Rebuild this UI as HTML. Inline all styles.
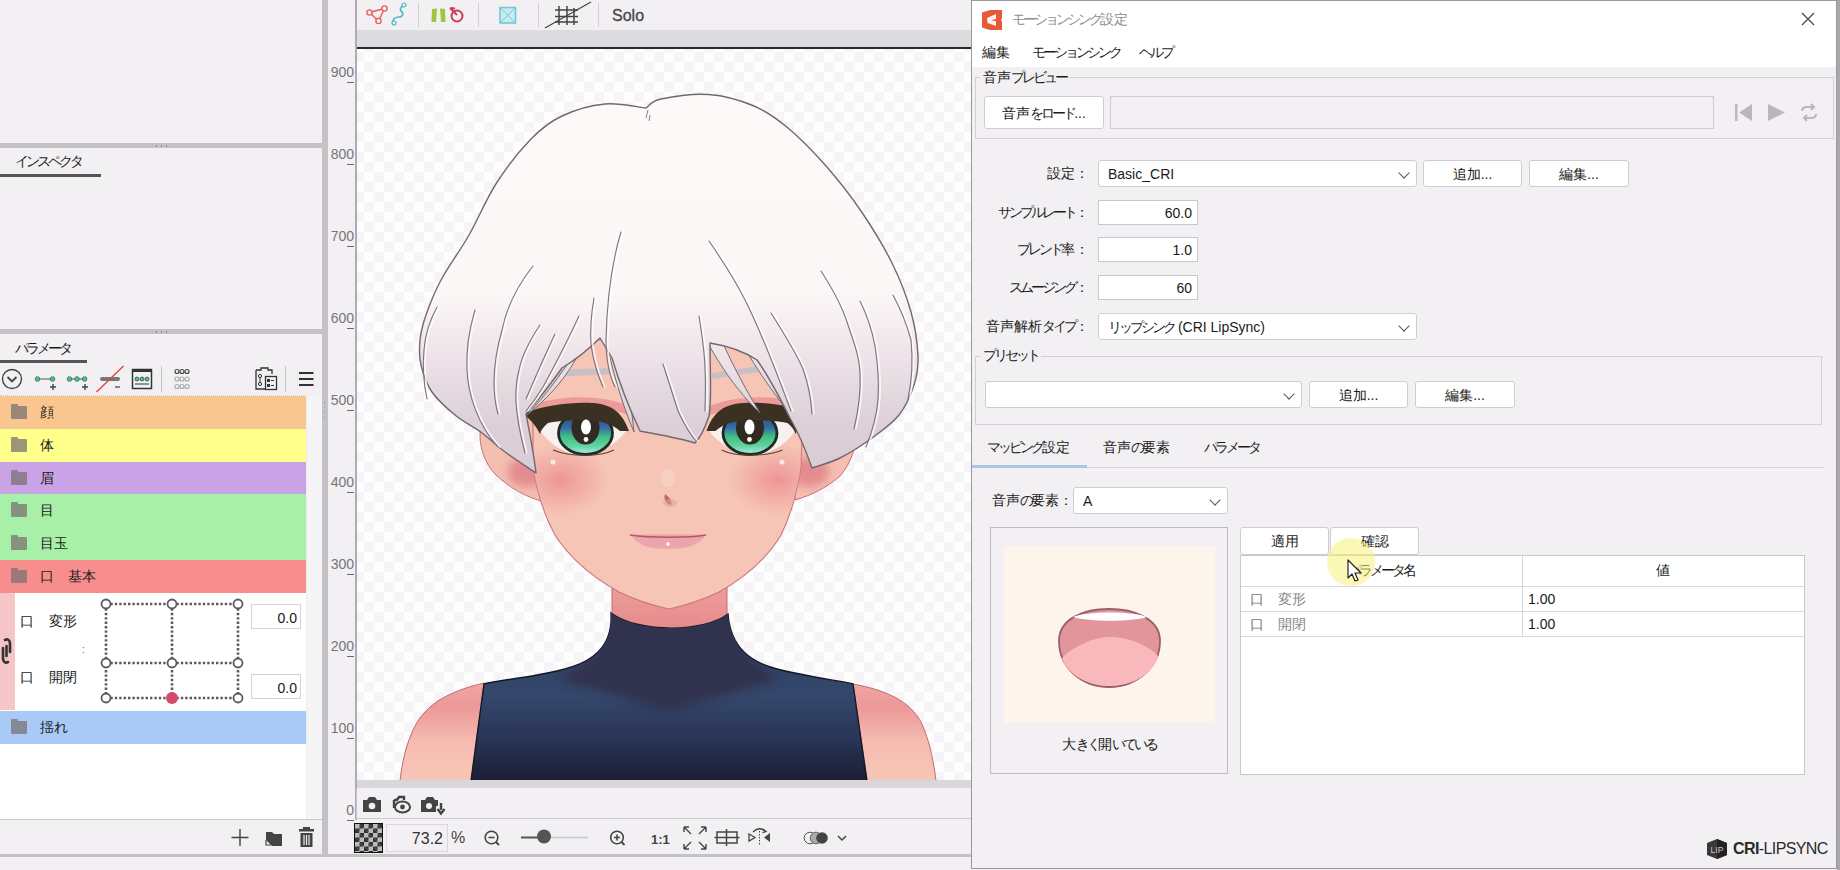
<!DOCTYPE html>
<html><head><meta charset="utf-8">
<style>
*{box-sizing:border-box;margin:0;padding:0}
html,body{width:1840px;height:870px;overflow:hidden;background:#f2f0f3;font-family:"Liberation Sans",sans-serif;color:#1a1a1a;position:relative}
.a{position:absolute}
.t{position:absolute;white-space:nowrap;line-height:1}
.split{background:#c4c2c6}
.row{position:absolute;left:0;width:306px;height:33px}
.row .fold{position:absolute;left:11px;top:10px;width:16px;height:13px;background:#7a7470;opacity:.75;border-radius:1px}
.row .fold:before{content:"";position:absolute;left:0;top:-2px;width:7px;height:3px;background:inherit;border-radius:1px 1px 0 0}
.row .lb{position:absolute;left:40px;top:9px;font-size:14px;line-height:1}
.btn{position:absolute;background:#fff;border:1px solid #cfcdd1;border-radius:3px;font-size:14px;text-align:center;line-height:1}
.inp{position:absolute;background:#fff;border:1px solid #c9c7cb;font-size:14px;line-height:1;text-align:right}
.combo{position:absolute;background:#fff;border:1px solid #cfcdd1;border-radius:3px;font-size:14px;line-height:1}
.chev{position:absolute;right:8px;top:8px;width:8px;height:8px;border-right:1.3px solid #555;border-bottom:1.3px solid #555;transform:rotate(45deg)}
.lbl{position:absolute;font-size:14px;line-height:1;text-align:right;white-space:nowrap}
.k{letter-spacing:-3px}
</style></head><body>

<!-- LEFT PANEL -->
<div class="a split" style="left:0;top:143px;width:322px;height:5px"></div><div class="a" style="left:154px;top:145px;width:15px;height:2px;background:radial-gradient(circle,#8a888c 0.9px,transparent 1.1px) 0 0/5px 2px"></div>
<div class="t" style="left:15px;top:154px;font-size:14px"><span class="k">インスペクタ</span></div>
<div class="a" style="left:0;top:174px;width:101px;height:3px;background:#555"></div>
<div class="a split" style="left:0;top:329px;width:322px;height:5px"></div><div class="a" style="left:154px;top:331px;width:15px;height:2px;background:radial-gradient(circle,#8a888c 0.9px,transparent 1.1px) 0 0/5px 2px"></div>
<div class="t" style="left:15px;top:341px;font-size:14px"><span class="k">パラメータ</span></div>
<div class="a" style="left:0;top:360px;width:87px;height:3px;background:#555"></div>
<div class="a split" style="left:322px;top:0;width:6px;height:855px"></div>

<!-- param list -->
<div class="a" style="left:0;top:395px;width:306px;height:424px;background:#fff"></div>
<div class="row" style="top:396px;background:#f9c68f"><div class="fold"></div><div class="lb">顔</div></div>
<div class="row" style="top:429px;background:#ffff8c"><div class="fold"></div><div class="lb">体</div></div>
<div class="row" style="top:462px;background:#c9a3e5"><div class="fold"></div><div class="lb">眉</div></div>
<div class="row" style="top:494px;background:#a8f0a8"><div class="fold"></div><div class="lb">目</div></div>
<div class="row" style="top:527px;background:#a8f0a8"><div class="fold"></div><div class="lb">目玉</div></div>
<div class="row" style="top:560px;background:#f78d8d"><div class="fold"></div><div class="lb">口　基本</div></div>
<div class="row" style="top:711px;background:#a9caf7"><div class="fold"></div><div class="lb">揺<span class="k">れ</span></div></div>

<!-- param toolbar -->
<svg class="a" style="left:0;top:362px" width="322" height="34" viewBox="0 362 322 34">
<circle cx="12" cy="379" r="9.5" fill="none" stroke="#444" stroke-width="1.4"/>
<path d="M7.5,377 L12,381.5 L16.5,377" fill="none" stroke="#444" stroke-width="1.8"/>
<line x1="37" y1="379" x2="52" y2="379" stroke="#888" stroke-width="1.5"/><circle cx="37.5" cy="379" r="2.3" fill="#4ec49a" stroke="#2a6a55" stroke-width=".8"/><circle cx="52.5" cy="379" r="2.3" fill="#4ec49a" stroke="#2a6a55" stroke-width=".8"/>
<path d="M53,384 V390 M50,387 H56" stroke="#444" stroke-width="1.4"/>
<line x1="69" y1="379" x2="85" y2="379" stroke="#888" stroke-width="1.5"/><circle cx="69.5" cy="379" r="2.3" fill="#4ec49a" stroke="#2a6a55" stroke-width=".8"/><circle cx="77" cy="379" r="2.3" fill="#4ec49a" stroke="#2a6a55" stroke-width=".8"/><circle cx="84.6" cy="379" r="2.3" fill="#4ec49a" stroke="#2a6a55" stroke-width=".8"/>
<path d="M85,384 V390 M82,387 H88" stroke="#444" stroke-width="1.4"/>
<rect x="100" y="377" width="20" height="4" rx="2" fill="#777"/>
<line x1="96.5" y1="392" x2="123.5" y2="366" stroke="#e04040" stroke-width="1.3"/>
<path d="M115,387 H120" stroke="#555" stroke-width="1.4"/>
<rect x="132.5" y="369.5" width="19" height="19" fill="none" stroke="#333" stroke-width="1.5"/><rect x="132" y="369" width="20" height="3" fill="#333"/>
<circle cx="137" cy="379" r="2" fill="#4ec49a" stroke="#333" stroke-width=".7"/><circle cx="142" cy="379" r="2" fill="#4ec49a" stroke="#333" stroke-width=".7"/><circle cx="147" cy="379" r="2" fill="#4ec49a" stroke="#333" stroke-width=".7"/>
<line x1="135" y1="384" x2="149" y2="384" stroke="#333" stroke-width="1"/>
<line x1="161.5" y1="366" x2="161.5" y2="392" stroke="#c8c6ca" stroke-width="1"/>
<g fill="none" stroke-width="1.2"><g stroke="#444"><circle cx="177" cy="371.5" r="2"/><circle cx="182" cy="371.5" r="2"/><circle cx="187" cy="371.5" r="2"/></g>
<g stroke="#aaa"><circle cx="177" cy="379" r="2"/><circle cx="182" cy="379" r="2"/><circle cx="187" cy="379" r="2"/><circle cx="177" cy="386.5" r="2"/><circle cx="182" cy="386.5" r="2"/><circle cx="187" cy="386.5" r="2"/></g></g>
<path d="M256,370 H261 V368 H268 V370 H272 V374 M256,370 V389 H265" fill="none" stroke="#333" stroke-width="1.3"/>
<rect x="265.5" y="376.5" width="11" height="13" fill="none" stroke="#333" stroke-width="1.3"/>
<rect x="267" y="379" width="3" height="3" fill="#333"/><rect x="267" y="384" width="3" height="3" fill="#333"/><path d="M271,380.5 H274 M271,385.5 H274" stroke="#333"/>
<circle cx="260" cy="376" r="1.6" fill="none" stroke="#333"/><circle cx="260" cy="384" r="1.6" fill="none" stroke="#333"/><path d="M260,377.5 V382.5" stroke="#333"/>
<line x1="285.5" y1="366" x2="285.5" y2="392" stroke="#c8c6ca" stroke-width="1"/>
<path d="M299,373 H313.5 M299,379 H313.5 M299,385 H313.5" stroke="#333" stroke-width="2.2"/>
</svg>
<div class="a" style="left:0;top:395px;width:306px;height:1px;border-top:1px dotted #d8c8b0"></div>
<div class="a" style="left:306px;top:396px;width:16px;height:423px;background:#f5f4f7;border-left:1px solid #ecebee"></div>
<div class="a" style="left:323px;top:400px;width:3px;height:20px;background:radial-gradient(circle,#999 0.8px,transparent 1px) 0 0/3px 5px"></div>
<!-- expanded mouth params -->
<div class="a" style="left:0;top:593px;width:15px;height:117px;background:#f5c5c8"></div>
<svg class="a" style="left:0;top:638px" width="14" height="26" viewBox="0 0 14 26"><path d="M5,2 Q9,0 10,5 L10,14 M8,24 Q4,26 3,21 L3,10 M6.5,8 L6.5,18" fill="none" stroke="#333" stroke-width="2.6" stroke-linecap="round"/></svg>
<div class="t" style="left:20px;top:614px;font-size:14px">口</div>
<div class="t" style="left:49px;top:614px;font-size:14px">変形</div>
<div class="t" style="left:20px;top:670px;font-size:14px">口</div>
<div class="t" style="left:49px;top:670px;font-size:14px">開閉</div>
<div class="t" style="left:82px;top:645px;font-size:10px;color:#666">:</div>
<svg class="a" style="left:98px;top:596px" width="150" height="110" viewBox="98 596 150 110">
<g stroke="#5c5a5e" stroke-width="2.6" stroke-dasharray="2.4 2" fill="none">
<path d="M106,604 H238 M106,663 H238 M106,698 H238 M106,604 V698 M172,604 V698 M238,604 V698"/></g>
<g fill="#fff" stroke="#5c5a5e" stroke-width="1.8">
<circle cx="106" cy="604" r="4.5"/><circle cx="172" cy="604" r="4.5"/><circle cx="238" cy="604" r="4.5"/>
<circle cx="106" cy="663" r="4.5"/><circle cx="172" cy="663" r="4.5"/><circle cx="238" cy="663" r="4.5"/>
<circle cx="106" cy="698" r="4.5"/><circle cx="238" cy="698" r="4.5"/></g>
<circle cx="172" cy="698" r="6" fill="#d54a6a"/>
</svg>
<div class="inp" style="left:251px;top:604px;width:50px;height:25px;padding:6px 3px 0 0;border-color:#d5d3d7">0.0</div>
<div class="inp" style="left:251px;top:674px;width:50px;height:25px;padding:6px 3px 0 0;border-color:#d5d3d7">0.0</div>
<!-- bottom toolbar -->
<svg class="a" style="left:225px;top:824px" width="97" height="28" viewBox="225 824 97 28">
<path d="M240,829 V846 M231.5,837.5 H248.5" stroke="#444" stroke-width="1.4"/>
<path d="M266,832 H272 L274,834 H282 V846 H272 L266,840 Z" fill="#444"/><path d="M266,840 V845 H271" fill="none" stroke="#444" stroke-width="1.2"/>
<rect x="299" y="829" width="15" height="2.5" fill="#444"/><rect x="303" y="827" width="7" height="2.5" fill="#444"/>
<path d="M300.5,833 H312.5 V847 H300.5 Z" fill="#444"/><path d="M304,835 V845 M306.5,835 V845 M309,835 V845" stroke="#f2f0f3" stroke-width="1.2"/>
</svg>
<div class="a" style="left:0;top:819px;width:322px;height:1px;background:#cac8cc"></div>
<div class="a split" style="left:0;top:854px;width:971px;height:3px"></div>

<!-- ruler -->
<div class="t" style="right:1486px;top:65px;font-size:14px;color:#777579">900</div><div class="a" style="left:347px;top:82px;width:7px;height:1px;background:#6a686c"></div>
<div class="t" style="right:1486px;top:147px;font-size:14px;color:#777579">800</div><div class="a" style="left:347px;top:164px;width:7px;height:1px;background:#6a686c"></div>
<div class="t" style="right:1486px;top:229px;font-size:14px;color:#777579">700</div><div class="a" style="left:347px;top:246px;width:7px;height:1px;background:#6a686c"></div>
<div class="t" style="right:1486px;top:311px;font-size:14px;color:#777579">600</div><div class="a" style="left:347px;top:328px;width:7px;height:1px;background:#6a686c"></div>
<div class="t" style="right:1486px;top:393px;font-size:14px;color:#777579">500</div><div class="a" style="left:347px;top:410px;width:7px;height:1px;background:#6a686c"></div>
<div class="t" style="right:1486px;top:475px;font-size:14px;color:#777579">400</div><div class="a" style="left:347px;top:492px;width:7px;height:1px;background:#6a686c"></div>
<div class="t" style="right:1486px;top:557px;font-size:14px;color:#777579">300</div><div class="a" style="left:347px;top:574px;width:7px;height:1px;background:#6a686c"></div>
<div class="t" style="right:1486px;top:639px;font-size:14px;color:#777579">200</div><div class="a" style="left:347px;top:656px;width:7px;height:1px;background:#6a686c"></div>
<div class="t" style="right:1486px;top:721px;font-size:14px;color:#777579">100</div><div class="a" style="left:347px;top:738px;width:7px;height:1px;background:#6a686c"></div>
<div class="t" style="right:1486px;top:803px;font-size:14px;color:#777579">0</div><div class="a" style="left:347px;top:820px;width:7px;height:1px;background:#6a686c"></div>

<div class="a" style="left:355px;top:0;width:2px;height:820px;background:#aeacb0"></div>

<!-- canvas toolbar -->
<div class="a" style="left:357px;top:30px;width:614px;height:17px;background:#dddbde"></div>
<div class="a" style="left:357px;top:47px;width:614px;height:2px;background:#2a2a2e"></div>
<svg class="a" style="left:357px;top:0" width="300" height="30" viewBox="357 0 300 30">
<g fill="none" stroke="#e8605c" stroke-width="1.5"><path d="M369.5,12.5 L384.5,8.5 L378.5,21 Z"/></g>
<g fill="#f2f0f3" stroke="#e8605c" stroke-width="1.4"><circle cx="369.5" cy="12.5" r="2.6"/><circle cx="384.5" cy="8.5" r="2.6"/><circle cx="378.5" cy="21" r="2.6"/></g>
<path d="M394,23 C391,19 396,17 399,17 C403,17 404,13 401,11 C399,9 402,6 404,5" fill="none" stroke="#4cb8c0" stroke-width="1.6"/>
<circle cx="394" cy="23" r="2" fill="#f2f0f3" stroke="#4cb8c0" stroke-width="1.2"/><circle cx="404" cy="5" r="2" fill="#f2f0f3" stroke="#4cb8c0" stroke-width="1.2"/>
<line x1="418.5" y1="3" x2="418.5" y2="27" stroke="#d0ced2"/>
<path d="M432,9 L437,8.5 L436,22 L431.5,22 Z M440,8.5 L445,9 L445.5,22 L441,22 Z" fill="#9cc840"/>
<circle cx="457" cy="16" r="5.5" fill="none" stroke="#d03a5a" stroke-width="2"/><path d="M450,8 L457,15 M450,8 L455,8.5" stroke="#d03a5a" stroke-width="1.8"/>
<line x1="478.5" y1="3" x2="478.5" y2="27" stroke="#d0ced2"/>
<rect x="500" y="7.5" width="15.5" height="15.5" fill="#c8ecf0" stroke="#70c8d8" stroke-width="1.6"/>
<path d="M500,7.5 L515.5,23 M515.5,7.5 L500,23" stroke="#70c8d8" stroke-width="1"/>
<line x1="538.5" y1="3" x2="538.5" y2="27" stroke="#d0ced2"/>
<path d="M559,6 V25 M567,6 V25 M574,8 V25 M555,10 H578 M555,16.5 H578 M555,22 H578" stroke="#444" stroke-width="1.5"/>
<line x1="545" y1="28" x2="591" y2="2" stroke="#444" stroke-width="1.2"/>
<line x1="598.5" y1="3" x2="598.5" y2="27" stroke="#d0ced2"/>
</svg>
<div class="t" style="left:612px;top:8px;font-size:16px;color:#4a484c;-webkit-text-stroke:0.35px #4a484c">Solo</div>

<!-- canvas -->
<div class="a" id="canvas" style="left:357px;top:49px;width:614px;height:731px;background:repeating-conic-gradient(#f7f4f8 0 25%,#fefdfe 0 50%) 7px 3px/20px 20px"></div>
<!--CHAR--><svg class="a" style="left:357px;top:49px" width="614" height="731" viewBox="357 49 614 731">
<defs>
<linearGradient id="hairG" x1="0" y1="95" x2="0" y2="475" gradientUnits="userSpaceOnUse">
<stop offset="0" stop-color="#fdf9f9"/><stop offset="0.52" stop-color="#fcf7f7"/><stop offset="0.66" stop-color="#f0e6eb"/><stop offset="0.86" stop-color="#ddd0d8"/><stop offset="1" stop-color="#d8cbd4"/></linearGradient>
<linearGradient id="sideG" x1="0" y1="300" x2="0" y2="475" gradientUnits="userSpaceOnUse">
<stop offset="0" stop-color="#fcf7f7" stop-opacity="0"/><stop offset="1" stop-color="#f4eef2" stop-opacity=".9"/></linearGradient>
<linearGradient id="shirtG" x1="0" y1="612" x2="0" y2="781" gradientUnits="userSpaceOnUse"><stop offset="0" stop-color="#30405f"/><stop offset="0.5" stop-color="#34486c"/><stop offset="0.75" stop-color="#2a3456"/><stop offset="1" stop-color="#1b1d34"/></linearGradient>
<linearGradient id="armL" x1="0" y1="683" x2="0" y2="781" gradientUnits="userSpaceOnUse"><stop offset="0" stop-color="#f0a6a2"/><stop offset="0.25" stop-color="#ec9898"/><stop offset="0.6" stop-color="#f5bcb0"/><stop offset="1" stop-color="#f7c6b7"/></linearGradient>
<linearGradient id="neckG" x1="0" y1="560" x2="0" y2="630" gradientUnits="userSpaceOnUse"><stop offset="0" stop-color="#f0aaa2"/><stop offset="1" stop-color="#e68a8c"/></linearGradient>
<radialGradient id="blush"><stop offset="0" stop-color="#ec8e90" stop-opacity=".9"/><stop offset="0.5" stop-color="#ee9898" stop-opacity=".5"/><stop offset="1" stop-color="#ee9898" stop-opacity="0"/></radialGradient>
<radialGradient id="irisG" cx="0.5" cy="0.7" r="0.65"><stop offset="0" stop-color="#a8e4e4"/><stop offset="0.4" stop-color="#50c890"/><stop offset="0.75" stop-color="#3a86a8"/><stop offset="1" stop-color="#2a4a80"/></radialGradient>
<linearGradient id="irisL" x1="0" y1="0" x2="0" y2="1"><stop offset="0" stop-color="#2a4470"/><stop offset="0.38" stop-color="#3a6aa8"/><stop offset="0.5" stop-color="#3aa090"/><stop offset="0.6" stop-color="#42c282"/><stop offset="0.8" stop-color="#62d2a2"/><stop offset="1" stop-color="#b4ece8"/></linearGradient>
<clipPath id="faceClip"><path d="M533,340 L533,468 C537,493 544,515 555,535 C571,560 594,578 619,592 C638,601 655,606 669,609 C683,606 700,601 719,592 C744,578 766,560 781,535 C791,515 797,493 801,468 L805,340 Z"/></clipPath>
<filter id="blur3" x="-20%" y="-20%" width="140%" height="140%"><feGaussianBlur stdDeviation="5"/></filter>
<clipPath id="shirtClip"><path d="M611,613 C612,628 608,642 598,652 C585,665 565,670 537,675 C515,679 495,681 484,684 L471,781 L867,781 L853,684 C842,681 822,679 805,675 C777,670 757,665 744,652 C734,642 729,628 728,614 C705,632 640,634 611,613 Z"/></clipPath>
<clipPath id="earL"><path d="M540,418 C515,415 490,416 481,426 C478,440 482,460 495,474 C510,488 525,497 545,502 Z"/></clipPath><clipPath id="earR"><path d="M798,418 C823,415 848,420 855,430 C857,445 852,462 840,476 C826,488 812,495 795,500 Z"/></clipPath>
<filter id="blur2" x="-50%" y="-50%" width="200%" height="200%"><feGaussianBlur stdDeviation="4"/></filter>
</defs>
<!-- arms -->
<path d="M484,683 C455,690 430,700 416,724 C405,745 402,765 400,781 L471,781 Z" fill="url(#armL)" stroke="#c46a72" stroke-width="1"/>
<path d="M853,684 C885,690 910,700 922,724 C931,745 934,765 936,781 L867,781 Z" fill="url(#armL)" stroke="#c46a72" stroke-width="1"/>
<!-- neck -->
<path d="M612,560 L612,645 L727,645 L727,560 Z" fill="url(#neckG)" stroke="#c46a72" stroke-width="1"/>
<!-- shirt -->
<path d="M611,613 C612,628 608,642 598,652 C585,665 565,670 537,675 C515,679 495,681 484,684 L471,781 L867,781 L853,684 C842,681 822,679 805,675 C777,670 757,665 744,652 C734,642 729,628 728,614 C705,632 640,634 611,613 Z" fill="url(#shirtG)" stroke="#141828" stroke-width="1.4"/>
<g clip-path="url(#shirtClip)"><path d="M600,600 L598,652 C585,663 570,672 560,680 C600,690 630,700 668,712 C706,700 740,690 780,680 C770,672 755,663 744,652 L740,600 Z" fill="#30304e" opacity=".95" filter="url(#blur3)"/></g>

<!-- ears -->
<path d="M540,418 C515,415 490,416 481,426 C478,440 482,460 495,474 C510,488 525,497 545,502 Z" fill="#f4beb0" stroke="#c66f72" stroke-width="1"/>
<g clip-path="url(#earL)"><ellipse cx="528" cy="472" rx="20" ry="15" fill="#e07f86" opacity=".8" filter="url(#blur2)"/></g>
<path d="M798,418 C823,415 848,420 855,430 C857,445 852,462 840,476 C826,488 812,495 795,500 Z" fill="#f4beb0" stroke="#c66f72" stroke-width="1"/>
<g clip-path="url(#earR)"><ellipse cx="809" cy="472" rx="20" ry="15" fill="#e07f86" opacity=".8" filter="url(#blur2)"/></g>
<!-- face -->
<path d="M533,340 L533,468 C537,493 544,515 555,535 C571,560 594,578 619,592 C638,601 655,606 669,609 C683,606 700,601 719,592 C744,578 766,560 781,535 C791,515 797,493 801,468 L805,340 Z" fill="#f6c5b5" stroke="#c8767a" stroke-width="1.1"/>
<g clip-path="url(#faceClip)"><ellipse cx="560" cy="480" rx="50" ry="36" fill="url(#blush)"/>
<ellipse cx="778" cy="480" rx="50" ry="36" fill="url(#blush)"/></g>
<circle cx="553" cy="462" r="2.5" fill="#fde8e0"/>
<circle cx="782" cy="462" r="2.5" fill="#fde8e0"/>
<!-- brow shading -->
<path d="M535,404 C565,394 610,395 632,408 L630,416 C605,404 565,404 535,412 Z" fill="#e8848a" opacity=".65"/>
<path d="M706,408 C730,395 775,394 805,404 L805,412 C775,404 735,404 708,416 Z" fill="#e8848a" opacity=".65"/>
<!-- left eye -->
<path d="M535,424 C548,415 600,411 627,430 C615,446 597,455 580,455 C560,453 546,441 535,424 Z" fill="#f7f1f0"/>
<ellipse cx="585.5" cy="433" rx="27" ry="21.5" fill="url(#irisL)" stroke="#1e2a22" stroke-width="2.8"/>
<ellipse cx="585.5" cy="428" rx="14" ry="16.5" fill="#302a20"/>
<path d="M522,414 C545,405 570,402 592,403 C613,404 623,414 629,431 L620,431 C612,424 600,420 585,420 C570,420 557,421 548,423 C544,426 541,430 540,434 C536,426 531,419 522,414 Z" fill="#3b3122"/>
<ellipse cx="586" cy="427" rx="5" ry="7.5" fill="#fff"/>
<circle cx="586" cy="439.5" r="2.4" fill="#fff"/>
<path d="M553,450 C570,457 600,457 614,450" fill="none" stroke="#5a4438" stroke-width="1.1"/>
<!-- right eye -->
<path d="M800.5,424 C787.5,415 735.5,411 708.5,430 C720.5,446 738.5,455 755.5,455 C775.5,453 789.5,441 800.5,424 Z" fill="#f7f1f0"/>
<ellipse cx="750.0" cy="433" rx="27" ry="21.5" fill="url(#irisL)" stroke="#1e2a22" stroke-width="2.8"/>
<ellipse cx="750.0" cy="428" rx="14" ry="16.5" fill="#302a20"/>
<path d="M813.5,414 C790.5,405 765.5,402 743.5,403 C722.5,404 712.5,414 706.5,431 L715.5,431 C723.5,424 735.5,420 750.5,420 C765.5,420 778.5,421 787.5,423 C791.5,426 794.5,430 795.5,434 C799.5,426 804.5,419 813.5,414 Z" fill="#3b3122"/>
<ellipse cx="749.5" cy="427" rx="5" ry="7.5" fill="#fff"/>
<circle cx="749.5" cy="439.5" r="2.4" fill="#fff"/>
<path d="M782.5,450 C765.5,457 735.5,457 721.5,450" fill="none" stroke="#5a4438" stroke-width="1.1"/>
<!-- nose -->
<ellipse cx="668" cy="478" rx="7" ry="9" fill="#fbdcd4" opacity=".45"/>
<path d="M665,494 C669,497 673,501 671,505 C667,505 663,500 665,494 Z" fill="#b86a6a"/>
<ellipse cx="670" cy="503" rx="7" ry="4" fill="#e8a09a" opacity=".55"/>
<!-- mouth -->
<path d="M631,535 C650,534 690,534 706,535 C698,546 685,549 668,549 C650,549 638,546 631,535 Z" fill="#eb9fab" opacity=".85"/>
<path d="M630,535 C650,538 690,538 706,535" fill="none" stroke="#b25a62" stroke-width="1.6"/>
<circle cx="668" cy="544" r="1.8" fill="#fff" opacity=".9"/>
<!-- headband bits -->
<path d="M553,370 L612,368 L613,374 L551,377 Z" fill="#c9c0c6"/>
<path d="M712,373 L770,364 L772,370 L712,379 Z" fill="#c9c0c6"/>
<!-- crossing strands over gaps -->
<path d="M688,300 C703,340 730,385 760,413 C740,380 720,342 706,300 Z" fill="url(#hairG)" stroke="#756c74" stroke-width="1" stroke-linejoin="round"/>
<path d="M722,310 C745,350 770,392 797,421 C777,387 757,350 740,310 Z" fill="url(#hairG)" stroke="#756c74" stroke-width="1" stroke-linejoin="round"/>
<path d="M598,300 C607,350 618,395 634,432 C630,395 624,350 616,300 Z" fill="url(#hairG)" stroke="#756c74" stroke-width="1" stroke-linejoin="round"/>
<path d="M596,300 C590,345 565,385 527,415 C556,385 580,345 612,300 Z" fill="url(#hairG)" stroke="#756c74" stroke-width="1" stroke-linejoin="round"/>
<!-- hair main -->
<path d="M536,473 C530.8,469.5 514.0,458.7 505.0,452.0 C496.0,445.3 490.3,439.2 482.0,433.0 C473.7,426.8 463.3,421.8 455.0,415.0 C446.7,408.2 437.7,400.3 432.0,392.0 C426.3,383.7 423.0,373.7 421.0,365.0 C419.0,356.3 419.2,348.3 420.0,340.0 C420.8,331.7 422.5,325.0 426.0,315.0 C429.5,305.0 433.8,293.3 441.0,280.0 C448.2,266.7 459.8,251.2 469.0,235.0 C478.2,218.8 486.2,199.0 496.5,183.0 C506.8,167.0 520.1,150.2 531.0,139.0 C541.9,127.8 549.7,121.8 562.0,116.0 C574.3,110.2 591.0,105.3 605.0,104.0 C619.0,102.7 639.2,107.3 646.0,108.0 C648.5,106.5 650.5,101.2 661.0,99.0 C671.5,96.8 693.5,93.3 709.0,94.5 C724.5,95.7 740.8,100.4 754.0,106.0 C767.2,111.6 776.0,118.0 788.0,128.0 C800.0,138.0 813.8,152.2 826.0,166.0 C838.2,179.8 850.0,194.8 861.0,211.0 C872.0,227.2 883.7,246.2 892.0,263.0 C900.3,279.8 906.7,296.5 911.0,312.0 C915.3,327.5 917.5,343.8 918.0,356.0 C918.5,368.2 917.2,375.2 914.0,385.0 C910.8,394.8 906.0,406.2 899.0,415.0 C892.0,423.8 881.8,430.8 872.0,438.0 C862.2,445.2 850.0,453.0 840.0,458.0 C830.0,463.0 816.7,466.3 812.0,468.0 C805,448 798,432 790,418 C780,398 770,378 757,360 C745,352 728,346 710,343 C710,375 712,400 709,416 C705,428 700,438 695,443 C680,438 655,434 640,431 C630,410 620,385 612,358 L600,338 C588,350 575,360 562,368 C550,385 538,400 526,414 C530,435 534,455 536,473 Z" fill="url(#hairG)" stroke="#716870" stroke-width="1.4" stroke-linejoin="round"/>
<!-- strand highlights --><g fill="none" stroke="#ffffff" stroke-width="1.6" opacity=".8" transform="translate(1.8,0)" stroke-linecap="round">
<path d="M621,232 C612,262 607,300 606,339 C606,360 609,375 615,387"/>
<path d="M533,266 C518,285 507,305 502,330 C495,355 490,385 498,414"/>
<path d="M475,310 C469,330 466,350 467,370 C468,395 478,425 498,447"/>
<path d="M437,307 C430,320 425,335 424,350 C422,370 424,385 427,399"/>
<path d="M540,325 C530,340 522,355 519,370 C514,390 514,410 525,453"/>
<path d="M594,298 C591,315 590,330 591,345 C594,365 598,375 603,387"/>
<path d="M709,241 C722,260 735,280 744,298 C758,325 772,360 791,411"/>
<path d="M699,316 C702,335 705,355 705,370 C706,385 705,400 705,411"/>
<path d="M663,364 C668,380 673,395 678,411 C684,424 690,434 696,441"/>
<path d="M771,313 C785,335 797,355 803,369 C808,383 811,398 812,414"/>
<path d="M821,271 C832,288 842,305 848,325 C855,345 860,360 860,375 C861,395 858,412 854,429"/>
<path d="M860,301 C867,315 872,330 875,346 C878,365 879,383 878,399 C877,415 872,432 866,447"/>
<path d="M893,295 C901,310 907,325 911,340 C913,360 912,380 908,399"/>
<path d="M579,316 C568,340 555,365 543,387 C537,397 531,405 526,411"/>
<path d="M555,334 C545,355 535,378 526,399"/>
</g>
<!-- strand lines -->
<g fill="none" stroke="#7c737b" stroke-width="1.1" stroke-linecap="round">
<path d="M621,232 C612,262 607,300 606,339 C606,360 609,375 615,387"/>
<path d="M533,266 C518,285 507,305 502,330 C495,355 490,385 498,414"/>
<path d="M475,310 C469,330 466,350 467,370 C468,395 478,425 498,447"/>
<path d="M437,307 C430,320 425,335 424,350 C422,370 424,385 427,399"/>
<path d="M540,325 C530,340 522,355 519,370 C514,390 514,410 525,453"/>
<path d="M594,298 C591,315 590,330 591,345 C594,365 598,375 603,387"/>
<path d="M709,241 C722,260 735,280 744,298 C758,325 772,360 791,411"/>
<path d="M699,316 C702,335 705,355 705,370 C706,385 705,400 705,411"/>
<path d="M663,364 C668,380 673,395 678,411 C684,424 690,434 696,441"/>
<path d="M771,313 C785,335 797,355 803,369 C808,383 811,398 812,414"/>
<path d="M821,271 C832,288 842,305 848,325 C855,345 860,360 860,375 C861,395 858,412 854,429"/>
<path d="M860,301 C867,315 872,330 875,346 C878,365 879,383 878,399 C877,415 872,432 866,447"/>
<path d="M893,295 C901,310 907,325 911,340 C913,360 912,380 908,399"/>
<path d="M579,316 C568,340 555,365 543,387 C537,397 531,405 526,411"/>
<path d="M555,334 C545,355 535,378 526,399"/>
</g>
<path d="M648,110 L646,118 M650,115 L649,121" stroke="#8a8088" stroke-width="1"/>
</svg>
<!--/CHAR-->

<div class="a" style="left:357px;top:780px;width:614px;height:8px;background:#d9d7db"></div>
<div class="a" style="left:356px;top:818px;width:615px;height:1px;background:#cac8cc"></div>
<div class="a" style="left:356px;top:788px;width:1px;height:31px;background:#c4c2c6"></div>
<svg class="a" style="left:357px;top:789px" width="100" height="29" viewBox="357 789 100 29">
<path d="M363,800 H367 L369,797 H375 L377,800 H381 V812 H363 Z" fill="#444"/><circle cx="372" cy="806" r="3.3" fill="#f2f0f3"/>
<path d="M394,800 H397 L399,797 H404 V800 M394,800 V808" fill="none" stroke="#444" stroke-width="2.4"/>
<ellipse cx="402.5" cy="807" rx="7.5" ry="5.5" fill="#f2f0f3" stroke="#444" stroke-width="2"/><circle cx="402.5" cy="807" r="2.4" fill="#444"/>
<path d="M421,800 H425 L427,797 H433 L435,800 H438 V806 H436 V812 H421 Z" fill="#444"/><circle cx="429" cy="806" r="3" fill="#f2f0f3"/>
<path d="M441,803 V810 M437.5,809 L441,813.5 L444.5,809" fill="none" stroke="#444" stroke-width="2.4"/>
</svg>
<div class="a" style="left:354px;top:823px;width:29px;height:30px;border:1.5px solid #111;background-color:#bbb;background-image:linear-gradient(45deg,#333 25%,transparent 25%,transparent 75%,#333 75%),linear-gradient(45deg,#333 25%,transparent 25%,transparent 75%,#333 75%);background-size:9px 9px;background-position:0 0,4.5px 4.5px"></div>
<div class="inp" style="left:386px;top:824px;width:62px;height:28px;padding:6px 4px 0 0;font-size:16px;border-color:#d9d7db;background:#f2f0f3;color:#333">73.2</div>
<div class="t" style="left:451px;top:830px;font-size:16px;color:#444">%</div>
<svg class="a" style="left:480px;top:822px" width="380" height="32" viewBox="480 822 380 32">
<circle cx="491.5" cy="837.5" r="6.3" fill="none" stroke="#444" stroke-width="1.6"/><path d="M488.5,837.5 H494.5" stroke="#444" stroke-width="1.6"/><path d="M496,842 L499,845" stroke="#444" stroke-width="1.8"/>
<line x1="521" y1="837.5" x2="544" y2="837.5" stroke="#555" stroke-width="2"/><line x1="544" y1="837.5" x2="588" y2="837.5" stroke="#c8c6ca" stroke-width="1.5"/>
<circle cx="544" cy="836.5" r="7" fill="#555"/>
<circle cx="617" cy="837.5" r="6.3" fill="none" stroke="#444" stroke-width="1.6"/><path d="M614,837.5 H620 M617,834.5 V840.5" stroke="#444" stroke-width="1.6"/><path d="M621.5,842 L624.5,845" stroke="#444" stroke-width="1.8"/>
<text x="651" y="843.5" font-family="Liberation Sans" font-weight="bold" font-size="13" fill="#444">1:1</text>
<path d="M684,827 L691,834 M684,827 H689 M684,827 V832 M706,827 L699,834 M706,827 H701 M706,827 V832 M684,849 L691,842 M684,849 H689 M684,849 V844 M706,849 L699,842 M706,849 H701 M706,849 V844" fill="none" stroke="#444" stroke-width="1.4"/>
<path d="M717,832 H737 V843 H717 Z M714.5,837.5 H739.5 M726.5,829 V846" fill="none" stroke="#444" stroke-width="1.5"/>
<path d="M749,834 L755,837.5 L749,841 Z" fill="none" stroke="#444" stroke-width="1.3"/><path d="M770,833 L764,837.5 L770,842 Z" fill="#444"/>
<path d="M759.5,831 V845" stroke="#444" stroke-width="1" stroke-dasharray="1.5 1.5"/><path d="M753,832 Q759,826 765,831 M763,829 L766,831.5 L762.5,832.5" fill="none" stroke="#444" stroke-width="1.3"/>
<circle cx="810" cy="838" r="5.8" fill="#f2f0f3" stroke="#555" stroke-width="1"/><circle cx="816" cy="838" r="5.8" fill="#aaa" stroke="#666" stroke-width="1"/><circle cx="822" cy="838" r="5.8" fill="#444"/>
<path d="M838,836 L842,840 L846,836" fill="none" stroke="#444" stroke-width="1.5"/>
</svg>


<!-- DIALOG -->
<div class="a" style="left:971px;top:0;width:866px;height:869px;background:#f2f0f3;border:1px solid #9a989c"></div>
<div class="a" style="left:972px;top:1px;width:864px;height:66px;background:#fff"></div>
<div class="a" style="left:1837px;top:0;width:3px;height:870px;background:#aaa8ac"></div>
<!-- title -->
<svg class="a" style="left:982px;top:10px" width="20" height="20" viewBox="0 0 20 20"><path d="M0,2.5 L8,0 H20 V9 L18.5,10 L20,11 V20 H8 L0,17.5 Z" fill="#e65a3a"/><path d="M5,8 L14,4 V9 L9,10.2 L14,11.2 V16 L5.5,13 Z" fill="#fff" opacity=".92"/></svg>
<div class="t" style="left:1012px;top:12px;font-size:14px;color:#8d8b90"><span class="k">モーションシンク</span>設定</div>
<svg class="a" style="left:1801px;top:12px" width="14" height="14" viewBox="0 0 14 14"><path d="M1,1 L13,13 M13,1 L1,13" stroke="#444" stroke-width="1.2"/></svg>
<div class="t" style="left:982px;top:45px;font-size:14px">編集</div>
<div class="t" style="left:1032px;top:45px;font-size:14px"><span class="k">モーションシンク</span></div>
<div class="t" style="left:1139px;top:45px;font-size:14px"><span class="k">ヘルプ</span></div>
<!-- group preview -->
<div class="a" style="left:975px;top:77px;width:859px;height:62px;border:1px solid #d3d1d5"></div>
<div class="t" style="left:980px;top:70px;font-size:14px;background:#f2f0f3;padding:0 3px">音声<span class="k">プレビュー</span></div>
<div class="btn" style="left:984px;top:96px;width:120px;height:33px;padding-top:9px">音声<span class="k">をロード</span>...</div>
<div class="a" style="left:1110px;top:96px;width:604px;height:33px;background:#f2f0f3;border:1px solid #cdcbcf"></div>
<svg class="a" style="left:1733px;top:103px" width="86" height="20" viewBox="0 0 86 20"><rect x="2" y="1" width="2.5" height="17" fill="#b9b7bb"/><path d="M19,1 L19,18 L6,9.5 Z" fill="#b9b7bb"/><path d="M35,1 L35,18 L52,9.5 Z" fill="#b9b7bb"/><path d="M69,8 Q69,4 74,4 L81,4 M78,1 L81,4 L78,7 M83,11 Q83,15 78,15 L71,15 M74,12 L71,15 L74,18" fill="none" stroke="#b9b7bb" stroke-width="2"/></svg>
<!-- settings -->
<div class="lbl" style="left:990px;width:99px;top:166px">設定：</div>
<div class="combo" style="left:1098px;top:160px;width:319px;height:27px;padding:6px 0 0 9px">Basic_CRI<div class="chev"></div></div>
<div class="btn" style="left:1423px;top:160px;width:99px;height:27px;padding-top:6px">追加...</div>
<div class="btn" style="left:1529px;top:160px;width:100px;height:27px;padding-top:6px">編集...</div>
<div class="lbl" style="left:990px;width:99px;top:205px"><span class="k">サンプルレート</span>：</div>
<div class="inp" style="left:1098px;top:200px;width:100px;height:25px;padding:5px 5px 0 0">60.0</div>
<div class="lbl" style="left:990px;width:99px;top:242px"><span class="k">ブレンド</span>率：</div>
<div class="inp" style="left:1098px;top:237px;width:100px;height:25px;padding:5px 5px 0 0">1.0</div>
<div class="lbl" style="left:990px;width:99px;top:280px"><span class="k">スムージング</span>：</div>
<div class="inp" style="left:1098px;top:275px;width:100px;height:25px;padding:5px 5px 0 0">60</div>
<div class="lbl" style="left:960px;width:129px;top:319px">音声解析<span class="k">タイプ</span>：</div>
<div class="combo" style="left:1098px;top:313px;width:319px;height:27px;padding:6px 0 0 9px"><span class="k">リップシンク</span> (CRI LipSync)<div class="chev"></div></div>
<!-- group preset -->
<div class="a" style="left:975px;top:356px;width:847px;height:69px;border:1px solid #d3d1d5"></div>
<div class="t" style="left:980px;top:348px;font-size:14px;background:#f2f0f3;padding:0 3px"><span class="k">プリセット</span></div>
<div class="combo" style="left:985px;top:381px;width:317px;height:27px"><div class="chev"></div></div>
<div class="btn" style="left:1309px;top:381px;width:99px;height:27px;padding-top:6px">追加...</div>
<div class="btn" style="left:1415px;top:381px;width:100px;height:27px;padding-top:6px">編集...</div>
<!-- tabs -->
<div class="t" style="left:987px;top:440px;font-size:14px"><span class="k">マッピング</span>設定</div>
<div class="t" style="left:1103px;top:440px;font-size:14px">音声<span class="k">の</span>要素</div>
<div class="t" style="left:1204px;top:440px;font-size:14px"><span class="k">パラメータ</span></div>
<div class="a" style="left:972px;top:467px;width:852px;height:1px;background:#d8d6da"></div>
<div class="a" style="left:972px;top:465px;width:115px;height:3px;background:#a9c6e4"></div>
<!-- mapping -->
<div class="lbl" style="left:960px;width:113px;top:493px">音声<span class="k">の</span>要素：</div>
<div class="combo" style="left:1073px;top:487px;width:155px;height:27px;padding:6px 0 0 9px">A<div class="chev"></div></div>
<div class="a" style="left:990px;top:527px;width:238px;height:247px;border:1px solid #bdbbbf"></div>
<div class="a" style="left:1004px;top:546px;width:211px;height:177px;background:#fdf5ec"></div>
<svg class="a" style="left:1050px;top:600px" width="120" height="95" viewBox="0 0 120 95">
<path d="M9,41 C9,18 35,9 59,9 C83,9 110,18 110,41 C110,66 88,87 59,87 C30,87 9,66 9,41 Z" fill="#e2969c" stroke="#9a5e66" stroke-width="1.8"/>
<path d="M12,58 C25,45 45,37 60,37 C78,37 98,45 108,56 C104,72 85,86 59,86 C35,86 16,72 12,58 Z" fill="#f9b9bc"/>
<path d="M23,17 C36,11 84,11 97,17 C80,22 40,22 23,17 Z" fill="#fff"/>
</svg>
<div class="t" style="left:1062px;top:737px;font-size:14px">大<span class="k">きく</span>開<span class="k">いている</span></div>
<div class="btn" style="left:1240px;top:527px;width:89px;height:28px;padding-top:6px">適用</div>
<div class="btn" style="left:1330px;top:527px;width:89px;height:28px;padding-top:6px">確認</div>
<div class="a" style="left:1240px;top:555px;width:565px;height:220px;background:#fff;border:1px solid #c8c6ca"></div>
<div class="a" style="left:1241px;top:586px;width:563px;height:1px;background:#d8d6da"></div>
<div class="a" style="left:1241px;top:611px;width:563px;height:1px;background:#d8d6da"></div>
<div class="a" style="left:1241px;top:636px;width:563px;height:1px;background:#d8d6da"></div>
<div class="a" style="left:1522px;top:556px;width:1px;height:81px;background:#d8d6da"></div>
<div class="t" style="left:1348px;top:563px;font-size:14px"><span class="k">パラメータ</span>名</div>
<div class="t" style="left:1656px;top:563px;font-size:14px">値</div>
<div class="t" style="left:1250px;top:592px;font-size:14px;color:#777">口</div>
<div class="t" style="left:1278px;top:592px;font-size:14px;color:#888">変形</div>
<div class="t" style="left:1528px;top:592px;font-size:14px">1.00</div>
<div class="t" style="left:1250px;top:617px;font-size:14px;color:#777">口</div>
<div class="t" style="left:1278px;top:617px;font-size:14px;color:#888">開閉</div>
<div class="t" style="left:1528px;top:617px;font-size:14px">1.00</div>
<div class="a" style="left:1327px;top:538px;width:48px;height:48px;border-radius:50%;background:rgba(248,240,120,.55)"></div>
<svg class="a" style="left:1347px;top:559px" width="16" height="24" viewBox="0 0 16 24"><path d="M1,1 L1,19 L5,15 L8,22 L11,21 L8,14 L14,14 Z" fill="#fff" stroke="#222" stroke-width="1.2" stroke-linejoin="round"/></svg>
<!-- logo -->
<svg class="a" style="left:1705px;top:838px" width="24" height="22" viewBox="0 0 24 22"><path d="M12,1 L22,5 L22,17 L12,21 L2,17 L2,5 Z" fill="#3a3839"/><path d="M12,1 L22,5 L22,17 L12,21 Z" fill="#222"/><text x="12" y="15" font-size="8.5" fill="#ccc" text-anchor="middle" font-family="Liberation Sans">LIP</text></svg>
<div class="t" style="left:1733px;top:841px;font-size:16px;color:#2a2a2a;letter-spacing:-0.6px"><b>CRI</b>-LIPSYNC</div>
</body></html>
